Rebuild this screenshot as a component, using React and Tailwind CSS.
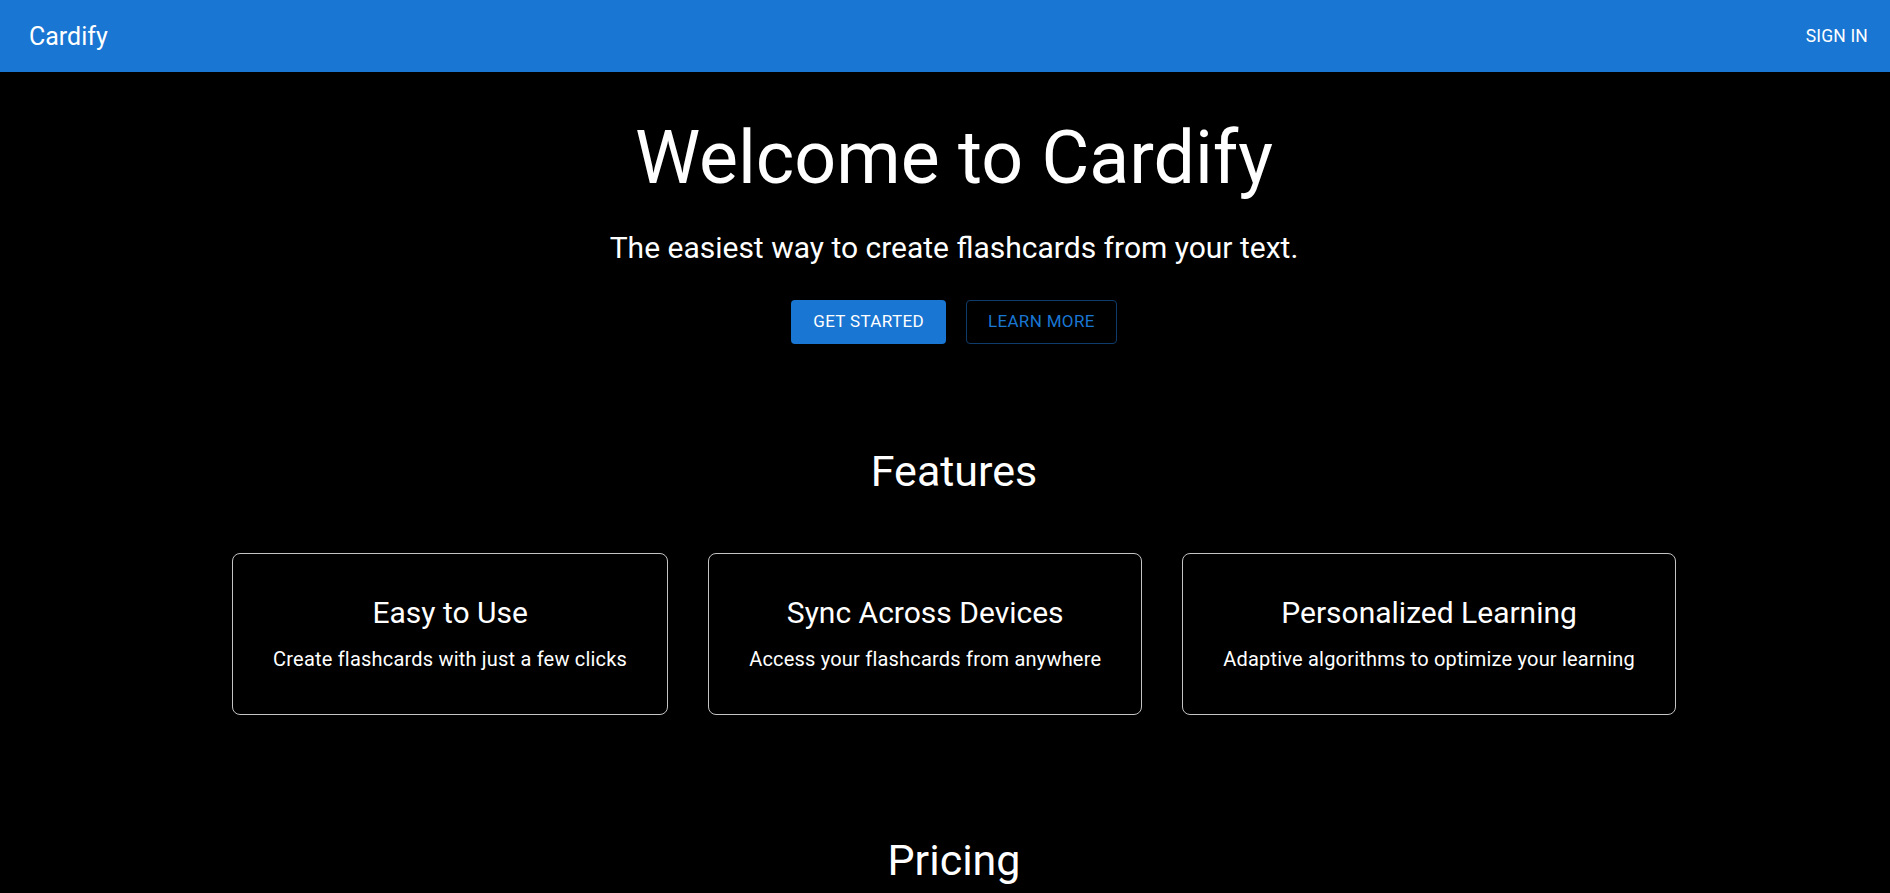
import React from "react";

const features = [
  { title: "Easy to Use", text: "Create flashcards with just a few clicks" },
  { title: "Sync Across Devices", text: "Access your flashcards from anywhere" },
  { title: "Personalized Learning", text: "Adaptive algorithms to optimize your learning" },
];

function Header() {
  return (
    <header className="h-[72px] bg-[#1976d2] flex items-center justify-between pl-[29px] pr-[22px] text-white">
      <div className="text-[25px] leading-none">Cardify</div>
      <button className="text-[17.5px] uppercase tracking-[0.01em]">Sign In</button>
    </header>
  );
}

function FeatureCard({ title, text }) {
  return (
    <div className="border border-[#c4c4c4] rounded-lg px-10 pt-10 pb-[41px] text-center">
      <h3 className="text-[30px] leading-[38px]">{title}</h3>
      <p className="text-[20px] leading-[28px] mt-[13px] tracking-[0.01em]">{text}</p>
    </div>
  );
}

export default function App() {
  return (
    <div
      className="min-h-screen bg-black text-white overflow-hidden"
      style={{ fontFamily: "Roboto, 'Noto Sans', sans-serif" }}
    >
      <Header />
      <main className="pl-[18px] flex flex-col items-center">
        {/* Hero */}
        <h1 className="mt-[43px] text-[73.5px] leading-[86px]">Welcome to Cardify</h1>
        <p className="mt-[27px] text-[30px] leading-[40px]">
          The easiest way to create flashcards from your text.
        </p>
        <div className="mt-[32px] flex gap-5">
          <button className="h-[44px] px-[22px] rounded bg-[#1976d2] text-white text-[17px] uppercase tracking-[0.02em] shadow-[0_3px_1px_-2px_rgba(0,0,0,0.2),0_2px_2px_0_rgba(0,0,0,0.14)]">
            Get Started
          </button>
          <button className="h-[44px] px-[21px] rounded border border-[#0e3c6b] text-[#1976d2] text-[17px] uppercase tracking-[0.02em]">
            Learn More
          </button>
        </div>

        {/* Features */}
        <h2 className="mt-[101px] text-[43px] leading-[52px]">Features</h2>
        <div className="mt-[56px] flex gap-[40px]">
          {features.map((f) => (
            <FeatureCard key={f.title} title={f.title} text={f.text} />
          ))}
        </div>

        {/* Pricing */}
        <h2 className="mt-[119px] text-[43px] leading-[52px]">Pricing</h2>
      </main>
    </div>
  );
}
